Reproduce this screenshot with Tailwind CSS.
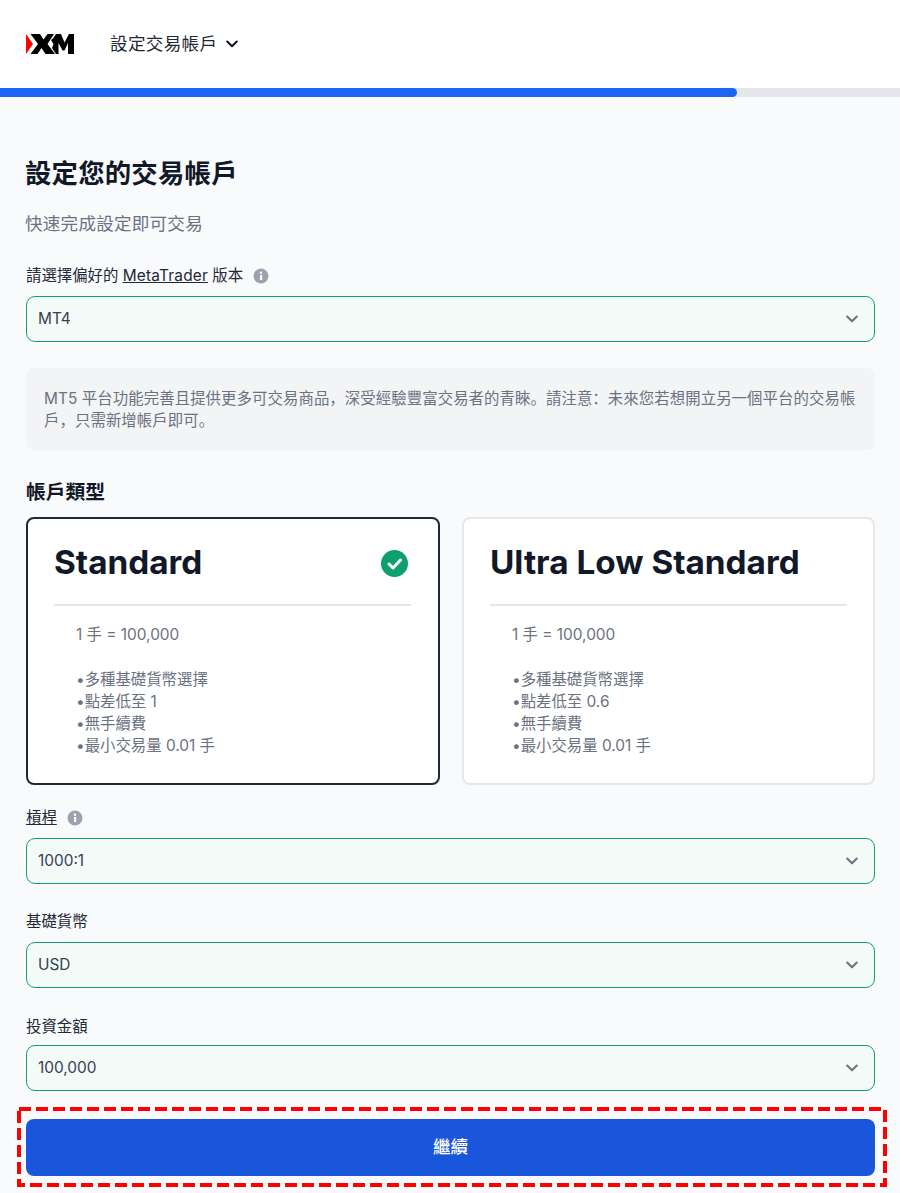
<!DOCTYPE html>
<html lang="zh-Hans"><head><meta charset="utf-8"><script src="https://cdn.jsdelivr.net/npm/@tailwindcss/browser@4"></script></head>
<body class="bg-[#f9fafb] font-['Inter','Noto_Sans_CJK_SC',sans-serif] text-[#111827]">
<div class="w-[900px] h-[1193px] overflow-hidden">
<header class="h-[88px] bg-white flex items-center pl-[26px]">
  <svg width="48" height="20" viewBox="0 0 48 20" class="mr-[36px]"><path d="M0 0L7 10L0 20Z" fill="#f00"/><path d="M4.5 0H14L17.5 5.5L21.5 0H28L21.5 10L29 20H19.5L15.5 14L11.5 20H4.5L12 10Z" fill="#000"/><path d="M27 4.5L30 0H35L38.5 8.5L43 0H48V20H42V9L38.5 16.5H36.5L32.5 9V20H30L26 14L27.5 10L25 6Z" fill="#000"/></svg>
  <span class="text-[17.6px] text-[#1f2937] leading-6 tracking-[0.3px]">設定交易帳戶</span>
  <svg class="ml-[9px]" width="12" height="8" viewBox="0 0 12 8" fill="none" stroke="#111827" stroke-width="2" stroke-linecap="round" stroke-linejoin="round"><path d="M1.2 1.5L6 6.2L10.8 1.5"/></svg>
</header>
<div class="h-[9px] bg-[#e5e7eb]"><div class="h-full w-[737px] bg-[#1c64f2] rounded-r-full"></div></div>
<main class="pl-[26px] pr-[25px] pt-[59px]">
  <h1 class="text-[26.4px] font-bold leading-[34px] text-[#111827] tracking-[0.2px] -ml-[1px]">設定您的交易帳戶</h1>
  <p class="mt-[17px] text-[17.6px] leading-[34px] text-[#6b7280] tracking-[0.2px] -ml-[1px]">快速完成設定即可交易</p>
  <div class="mt-[24px] flex items-center pt-[2px] text-[15.4px] leading-5 text-[#1f2937] h-5">請選擇偏好的&nbsp;<span class="underline tracking-[0.2px]">MetaTrader</span>&nbsp;版本
    <svg class="ml-[10px]" width="16" height="16" viewBox="0 0 16 16"><circle cx="8" cy="8" r="7.5" fill="#9ca3af"/><rect x="7" y="7" width="2.2" height="5" fill="#fff"/><circle cx="8" cy="4.7" r="1.2" fill="#fff"/></svg>
  </div>
  <div class="mt-[11px] h-[46px] rounded-[9px] border border-[#10a36f] bg-[#f3faf7] flex items-center justify-between pl-[11px] pr-[16px] text-[15.4px] text-[#374151]">MT4
    <svg width="12" height="8" viewBox="0 0 12 8" fill="none" stroke="#6b7280" stroke-width="2" stroke-linecap="round" stroke-linejoin="round"><path d="M1.2 1.5L6 6.2L10.8 1.5"/></svg>
  </div>
  <div class="mt-[26px] h-[82px] rounded-lg bg-[#f3f4f6] px-[18px] pt-[20px] text-[15.4px] leading-[22px] tracking-[0.08px] text-[#6b7280]">MT5 平台功能完善且提供更多可交易商品，深受經驗豐富交易者的青睞。請注意：未來您若想開立另一個平台的交易帳戶，只需新增帳戶即可。</div>
  <h2 class="mt-[30px] text-[19.8px] font-bold leading-6 text-[#111827]">帳戶類型</h2>
  <div class="mt-[13px] grid grid-cols-[414px_413px] gap-[22px]">
    <div class="h-[268px] rounded-lg border-2 border-[#1f2937] bg-white pl-[26px] pr-[27px] pt-[21px]">
      <div class="flex justify-between items-center h-[44px]"><span class="text-[33.3px] font-bold text-[#111827] leading-[44px]">Standard</span>
        <svg class="mr-[3px] mt-[3px]" width="27" height="27" viewBox="0 0 27 27"><circle cx="13.5" cy="13.5" r="13.5" fill="#0e9f6e"/><path d="M8 14L12 18L19.5 10" fill="none" stroke="#fff" stroke-width="3" stroke-linecap="round" stroke-linejoin="round"/></svg></div>
      <div class="mt-[20px] border-t-2 border-[#e5e7eb]"></div>
      <div class="pl-[22px] pt-[18px] text-[15.4px] leading-[22px] text-[#6b7280]"><p>1 手 = 100,000</p><ul class="mt-[23px]"><li>•多種基礎貨幣選擇</li><li>•點差低至 1</li><li>•無手續費</li><li>•最小交易量 0.01 手</li></ul></div>
    </div>
    <div class="h-[268px] rounded-lg border-2 border-[#e5e7eb] bg-white px-[26px] pt-[21px]">
      <div class="flex items-center h-[44px]"><span class="text-[33.3px] font-bold text-[#111827] leading-[44px]">Ultra Low Standard</span></div>
      <div class="mt-[20px] border-t-2 border-[#e5e7eb]"></div>
      <div class="pl-[22px] pt-[18px] text-[15.4px] leading-[22px] text-[#6b7280]"><p>1 手 = 100,000</p><ul class="mt-[23px]"><li>•多種基礎貨幣選擇</li><li>•點差低至 0.6</li><li>•無手續費</li><li>•最小交易量 0.01 手</li></ul></div>
    </div>
  </div>
  <div class="mt-[22px] flex items-center pt-[2px] text-[15.4px] leading-5 text-[#1f2937] h-5"><span class="underline">槓桿</span>
    <svg class="ml-[10px]" width="16" height="16" viewBox="0 0 16 16"><circle cx="8" cy="8" r="7.5" fill="#9ca3af"/><rect x="7" y="7" width="2.2" height="5" fill="#fff"/><circle cx="8" cy="4.7" r="1.2" fill="#fff"/></svg></div>
  <div class="mt-[11px] h-[46px] rounded-[9px] border border-[#10a36f] bg-[#f3faf7] flex items-center justify-between pl-[11px] pr-[16px] text-[15.4px] text-[#374151]">1000:1
    <svg width="12" height="8" viewBox="0 0 12 8" fill="none" stroke="#6b7280" stroke-width="2" stroke-linecap="round" stroke-linejoin="round"><path d="M1.2 1.5L6 6.2L10.8 1.5"/></svg></div>
  <div class="mt-[27px] pt-[1px] text-[15.4px] leading-5 text-[#1f2937] h-5">基礎貨幣</div>
  <div class="mt-[11px] h-[46px] rounded-[9px] border border-[#10a36f] bg-[#f3faf7] flex items-center justify-between pl-[11px] pr-[16px] text-[15.4px] text-[#374151]">USD
    <svg width="12" height="8" viewBox="0 0 12 8" fill="none" stroke="#6b7280" stroke-width="2" stroke-linecap="round" stroke-linejoin="round"><path d="M1.2 1.5L6 6.2L10.8 1.5"/></svg></div>
  <div class="mt-[27px] pt-[2px] text-[15.4px] leading-5 text-[#1f2937] h-5">投資金額</div>
  <div class="mt-[10px] h-[46px] rounded-[9px] border border-[#10a36f] bg-[#f3faf7] flex items-center justify-between pl-[11px] pr-[16px] text-[15.4px] text-[#374151]">100,000
    <svg width="12" height="8" viewBox="0 0 12 8" fill="none" stroke="#6b7280" stroke-width="2" stroke-linecap="round" stroke-linejoin="round"><path d="M1.2 1.5L6 6.2L10.8 1.5"/></svg></div>
  <div class="relative mt-[28px]">
    <button class="w-full h-[57px] rounded-lg bg-[#1a56db] text-white font-medium text-[17.6px]">繼續</button>
    <svg class="absolute top-[-12px] left-[-9px]" width="870" height="80" viewBox="0 0 870 80" fill="none"><rect x="2" y="2" width="866" height="76" stroke="#f00" stroke-width="4" stroke-dasharray="12 5"/></svg>
  </div>
</main>
</div>
</body></html>
